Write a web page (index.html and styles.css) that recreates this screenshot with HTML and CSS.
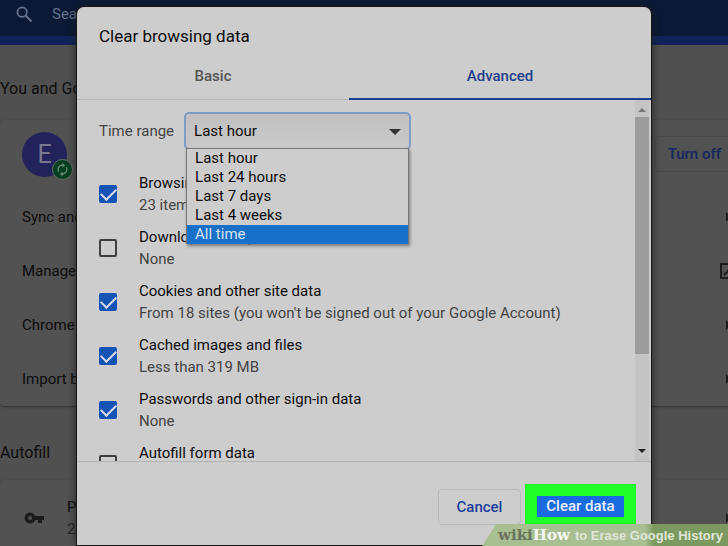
FILE: index.html
```html
<!DOCTYPE html>
<html lang="en">
<head>
<meta charset="utf-8">
<title>Settings - Clear browsing data</title>
<link rel="stylesheet" href="styles.css">
</head>
<body>
<div class="page">
  <header class="topbar">
    <svg class="search-icon" viewBox="0 0 18 18" aria-hidden="true"><circle cx="6.5" cy="6.5" r="5" fill="none" stroke="currentColor" stroke-width="2"/><path d="M10.4 10.4L16.5 16.5" stroke="currentColor" stroke-width="2.2"/></svg>
    <span>Sea</span>
  </header>
  <main class="settings">
    <h2 class="section-title">You and Go</h2>
    <section class="card">
      <div class="profile">
        <div class="avatar">E
          <span class="sync-badge"><svg viewBox="0 0 24 24" aria-hidden="true"><path fill="currentColor" d="M12 6v3l4-4-4-4v3c-4.4 0-8 3.6-8 8 0 1.6.5 3 1.200 4.300L6.700 14.800C6.300 14 6 13 6 12c0-3.300 2.700-6 6-6zm6.800 1.700L17.300 9.200c.4.800.7 1.800.7 2.800 0 3.300-2.700 6-6 6v-3l-4 4 4 4v-3c4.400 0 8-3.600 8-8 0-1.600-.5-3-1.200-4.300z"/></svg></span>
        </div>
        <button class="turn-off" type="button">Turn off</button>
      </div>
      <div class="row"><span>Sync and</span><svg class="row-icon" viewBox="0 0 16 16" aria-hidden="true"><path d="M6 3l5 5-5 5z" fill="currentColor"/></svg></div>
      <div class="row"><span>Manage</span><svg class="row-icon" viewBox="0 0 16 16" aria-hidden="true"><path d="M8 1H1v14h14V8M4 12l6-6" fill="none" stroke="currentColor" stroke-width="2"/></svg></div>
      <div class="row"><span>Chrome</span><svg class="row-icon" viewBox="0 0 16 16" aria-hidden="true"><path d="M6 3l5 5-5 5z" fill="currentColor"/></svg></div>
      <div class="row"><span>Import b</span><svg class="row-icon" viewBox="0 0 16 16" aria-hidden="true"><path d="M6 3l5 5-5 5z" fill="currentColor"/></svg></div>
    </section>
    <h2 class="section-title">Autofill</h2>
    <section class="card">
      <div class="row row-tall">
        <svg class="key-icon" viewBox="0 0 20 12" aria-hidden="true"><path fill="currentColor" fill-rule="evenodd" d="M11.200 4A5.500 5.500 0 1 0 11.200 8H14v3h4V8h2V4zM6 8a2 2 0 1 1 0-4 2 2 0 0 1 0 4z"/></svg>
        <div class="row-text"><div>P</div><div class="muted">2</div></div>
        <svg class="row-icon" viewBox="0 0 16 16" aria-hidden="true"><path d="M6 3l5 5-5 5z" fill="currentColor"/></svg>
      </div>
    </section>
  </main>
</div>

<div class="dialog" role="dialog" aria-labelledby="dialog-title">
  <h1 class="dialog-title" id="dialog-title">Clear browsing data</h1>
  <div class="tabs" role="tablist">
    <button class="tab" role="tab" type="button" aria-selected="false">Basic</button>
    <button class="tab tab-active" role="tab" type="button" aria-selected="true">Advanced</button>
  </div>
  <div class="body">
    <div class="options">
      <div class="range">
        <label for="range">Time range</label>
        <div class="select-wrap">
          <select id="range"><option>Last hour</option><option>Last 24 hours</option><option>Last 7 days</option><option>Last 4 weeks</option><option>All time</option></select>
          <ul class="menu" role="listbox" aria-label="Time range">
            <li role="option">Last hour</li>
            <li role="option">Last 24 hours</li>
            <li role="option">Last 7 days</li>
            <li role="option">Last 4 weeks</li>
            <li role="option" aria-selected="true" class="menu-active">All time</li>
          </ul>
        </div>
      </div>
      <label class="item"><input type="checkbox" checked><span class="item-text"><span>Browsing history</span><span class="sub">23 items</span></span></label>
      <label class="item"><input type="checkbox"><span class="item-text"><span>Download history</span><span class="sub">None</span></span></label>
      <label class="item"><input type="checkbox" checked><span class="item-text"><span>Cookies and other site data</span><span class="sub">From 18 sites (you won't be signed out of your Google Account)</span></span></label>
      <label class="item"><input type="checkbox" checked><span class="item-text"><span>Cached images and files</span><span class="sub">Less than 319 MB</span></span></label>
      <label class="item"><input type="checkbox" checked><span class="item-text"><span>Passwords and other sign-in data</span><span class="sub">None</span></span></label>
      <label class="item"><input type="checkbox"><span class="item-text"><span>Autofill form data</span></span></label>
    </div>
    <div class="scrollbar" aria-hidden="true">
      <span class="arrow arrow-up"></span>
      <span class="track"><span class="thumb"></span></span>
      <span class="arrow arrow-down"></span>
    </div>
  </div>
  <footer class="actions">
    <button class="cancel" type="button">Cancel</button>
    <div class="highlight"><button class="clear" type="button">Clear data</button></div>
  </footer>
</div>

<div class="watermark"><span class="wiki">wiki</span><span class="how">How</span><span class="caption">to Erase Google History</span></div>
</body>
</html>
```
FILE: styles.css
```css
* { box-sizing: border-box; }

html, body { height: 100%; }

body {
  margin: 0;
  overflow: hidden;
  background: #505050;
  color: #0c0c0c;
  font: 15px/22px Roboto, "Liberation Sans", sans-serif;
}

button, select { font: inherit; }

/* Dimmed settings page */
.page { height: 100%; overflow: hidden; }

.topbar {
  display: flex;
  gap: 19px;
  height: 45px;
  padding: 5px 16px;
  background: #0b1936;
  border-bottom: 9px solid #11235a;
  color: #65708a;
  font-size: 15px;
  line-height: 19px;
}

.search-icon { width: 17px; height: 17px; margin-top: 1px; }

.section-title {
  height: 74px;
  margin: 0;
  padding-top: 36px;
  font-size: 16px;
  font-weight: 400;
}

.settings .section-title:first-child { height: 75px; padding-top: 33px; }

.card {
  margin-right: -14px;
  border-radius: 4px;
  background: #525252;
  box-shadow: 0 1px 2px #303030;
}

.profile {
  display: flex;
  align-items: center;
  justify-content: space-between;
  height: 70px;
  padding: 0 8px 2px 22px;
}

.avatar {
  position: relative;
  width: 45px;
  height: 45px;
  border-radius: 50%;
  background: #22235a;
  color: #777a91;
  font-size: 25px;
  line-height: 46px;
  text-align: center;
}

.sync-badge {
  position: absolute;
  right: -6px;
  bottom: -3px;
  display: grid;
  place-items: center;
  width: 21px;
  height: 21px;
  border: 1px solid #64706a;
  border-radius: 50%;
  background: #063f20;
  color: #6f8c7a;
}

.sync-badge svg { width: 15px; height: 15px; }

.turn-off {
  height: 36px;
  padding: 0 12px;
  border: 1px solid #484848;
  border-radius: 4px;
  background: none;
  color: #15265e;
  font-weight: 500;
}

.row {
  display: flex;
  align-items: center;
  justify-content: space-between;
  height: 54px;
  padding: 0 6px 0 22px;
}

.row-icon { width: 16px; height: 16px; color: #1c1c1c; }
.row-tall { height: 76px; }
.key-icon { width: 20px; height: 12px; margin-left: 2px; color: #1c1c1c; }
.row-text { flex: 1; padding-left: 23px; }
.muted { color: #262626; }

/* Dialog */
.dialog {
  position: absolute;
  inset: 7px 77px 1px;
  display: flex;
  flex-direction: column;
  border-radius: 7px 7px 0 0;
  background: #cdcdcd;
  box-shadow: 0 0 0 1px #161616, 0 0 10px #1c1c1c;
}

.dialog-title {
  margin: 0;
  padding: 17px 22px 15px;
  font-size: 17px;
  font-weight: 400;
  line-height: 24px;
}

.tabs { display: flex; height: 37px; border-bottom: 1px solid #b8b8b8; }

.tab {
  flex: 1;
  height: 37px;
  padding: 0 0 10px;
  border: 0;
  border-bottom: 2px solid transparent;
  background: none;
  color: #555;
  font-weight: 500;
}

.tab-active {
  flex: 0 0 302px;
  border-color: #1f3f8c;
  color: #1f3f8c;
}

.body { display: flex; flex: 1; min-height: 0; }

.options { flex: 1; overflow: hidden; padding: 12px 22px 0; }

.range {
  display: flex;
  align-items: center;
  gap: 10px;
  margin-bottom: 17px;
  color: #444;
}

.select-wrap { position: relative; flex: 0 0 227px; }

select {
  display: block;
  width: 100%;
  height: 38px;
  padding: 0 8px;
  appearance: none;
  border: 2px solid #7d9dc4;
  border-radius: 5px;
  background: linear-gradient(#c1c1c1, #c9c9c9);
  color: #0c0c0c;
}

.select-wrap::after {
  content: "";
  position: absolute;
  top: 17px;
  right: 10px;
  border: 6px solid transparent;
  border-top-color: #333;
  border-bottom: 0;
}

.menu {
  position: absolute;
  z-index: 1;
  top: 36px;
  left: 2px;
  right: 2px;
  margin: 0;
  padding: 0;
  border: 1px solid #777;
  border-bottom: 0;
  background: #cdcdcd;
  box-shadow: 1px 2px 3px #777;
  color: #0c0c0c;
  line-height: 19px;
  list-style: none;
}

.menu li { padding: 0 8px; }
.menu .menu-active { background: #1870c8; color: #d6e2f0; }

.item {
  display: flex;
  align-items: center;
  gap: 22px;
  height: 54px;
}

.item-text { display: grid; grid-template-rows: 22px 22px; }
.sub { color: #444; }

.item input {
  flex: none;
  width: 18px;
  height: 18px;
  margin: 0;
  appearance: none;
  border: 2px solid #3f3f3f;
  border-radius: 2px;
}

.item input:checked {
  border: 0;
  background: #1553b5;
  display: grid;
}

.item input:checked::before {
  content: "";
  place-self: center;
  width: 13px;
  height: 7px;
  margin-bottom: 4px;
  border: solid #d5dded;
  border-width: 0 0 2px 2px;
  transform: rotate(-45deg);
}

.scrollbar {
  display: flex;
  flex-direction: column;
  flex: 0 0 14px;
  margin-right: 2px;
  align-items: center;
  background: #c4c4c4;
}

.arrow { border: 4px solid transparent; }
.arrow-up { border-bottom-color: #777; border-top-width: 0; margin: 8px 0 5px; }
.arrow-down { border-top-color: #222; border-bottom-width: 0; margin: 7px 0 8px; }
.track { flex: 1; width: 14px; }
.thumb { display: block; height: 73%; background: #9c9c9c; }

.actions {
  display: flex;
  align-items: center;
  justify-content: flex-end;
  gap: 4px;
  height: 84px;
  padding: 6px 15px 0 0;
  border-top: 1px solid #b4b4b4;
}

.cancel {
  width: 83px;
  height: 36px;
  border: 1px solid #b8b8b8;
  border-radius: 4px;
  background: none;
  color: #1f3f9c;
  font-weight: 500;
}

.highlight { padding: 12px; background: #1eff2a; }

.clear {
  display: block;
  width: 87px;
  height: 21px;
  padding: 0;
  border: 0;
  background: #1a6be0;
  color: #e8f0ff;
  font-weight: 500;
  line-height: 21px;
}

/* Caption strip in the corner */
.watermark {
  position: absolute;
  right: 0;
  bottom: 0;
  display: flex;
  align-items: center;
  height: 22px;
  padding: 1px 5px 0 16px;
  background: linear-gradient(to right, #a8bf92 66%, #7c9a60 70%);
  clip-path: polygon(14px 0, 100% 0, 100% 100%, 0 100%);
  color: #dfe6d6;
  font: bold 13px/21px "Liberation Sans", sans-serif;
}

.wiki, .how { font-family: "DejaVu Serif", "Liberation Serif", serif; font-size: 15px; }
.wiki { color: #68745c; }
.how { color: #f6f8f3; }
.caption { padding-left: 5px; }
```
